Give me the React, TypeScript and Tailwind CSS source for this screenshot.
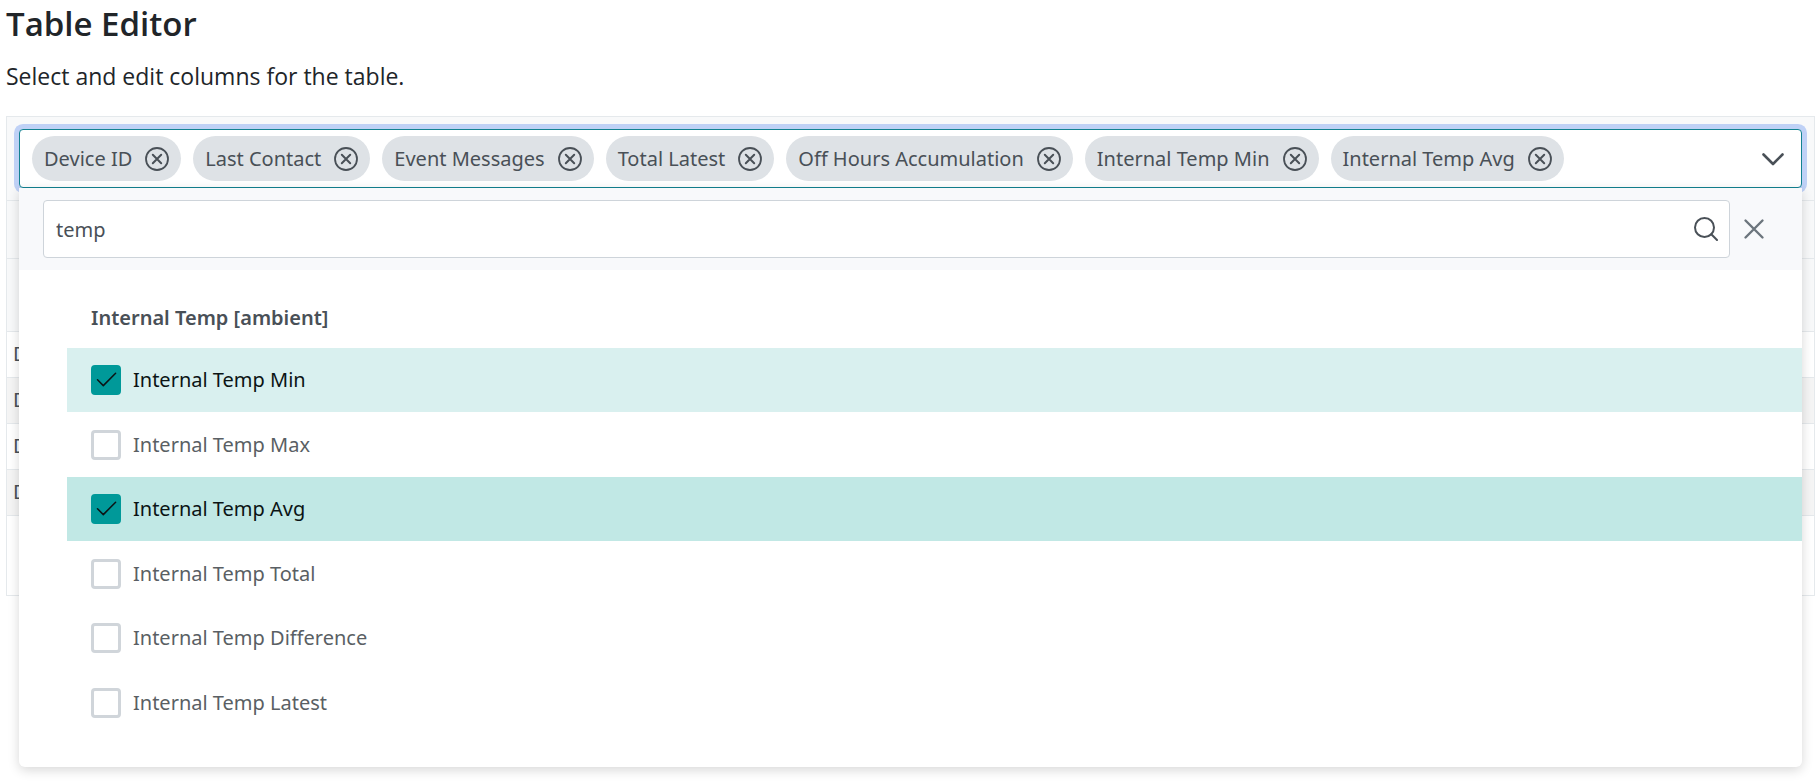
import { useState } from 'react'

const CHIPS = [
  'Device ID',
  'Last Contact',
  'Event Messages',
  'Total Latest',
  'Off Hours Accumulation',
  'Internal Temp Min',
  'Internal Temp Avg',
]

const OPTIONS = [
  'Internal Temp Min',
  'Internal Temp Max',
  'Internal Temp Avg',
  'Internal Temp Total',
  'Internal Temp Difference',
  'Internal Temp Latest',
]

const ROWS = ['D', 'D', 'D', 'D']

function Chip({ label, onRemove }: { label: string; onRemove: () => void }) {
  return (
    <li className="flex h-[45px] items-center gap-[13px] rounded-full bg-[#dee2e6] px-3 text-[#495057]">
      <span className="whitespace-nowrap">{label}</span>
      <button type="button" aria-label={`Remove ${label}`} onClick={onRemove} className="shrink-0">
        <svg className="block size-6" viewBox="0 0 24 24" fill="none" stroke="currentColor" strokeWidth="1.8" strokeLinecap="round">
          <circle cx="12" cy="12" r="11" />
          <path d="M7.8 7.8l8.4 8.4M16.2 7.8l-8.4 8.4" strokeWidth="2" />
        </svg>
      </button>
    </li>
  )
}

function Option({ label, checked, focused, onToggle }: {
  label: string; checked: boolean; focused: boolean; onToggle: () => void
}) {
  const tone = checked
    ? focused ? 'bg-[#c1e8e5] text-[#0b1415]' : 'bg-[#d9f0ef] text-[#0b1415]'
    : 'text-[#5a5f64]'
  return (
    <li className="flex-1">
      <label className={`flex h-16 items-center gap-3 px-6 ${tone}`}>
        <span className="grid size-[30px] shrink-0">
          <input
            type="checkbox"
            checked={checked}
            onChange={onToggle}
            className="col-start-1 row-start-1 size-full appearance-none rounded border-3 border-[#d0d5da] bg-white checked:border-[#009999] checked:bg-[#009999]"
          />
          {checked && (
            <svg className="pointer-events-none col-start-1 row-start-1 size-[30px]" viewBox="0 0 30 30" fill="none" stroke="#0b1415" strokeWidth="1.5" strokeLinecap="round" strokeLinejoin="round">
              <path d="M6.5 14.8l5.8 5.8L24.6 8.2" />
            </svg>
          )}
        </span>
        <span>{label}</span>
      </label>
    </li>
  )
}

export default function App() {
  const [selected, setSelected] = useState(CHIPS)
  const [query, setQuery] = useState('temp')

  const toggle = (name: string) =>
    setSelected((s) => (s.includes(name) ? s.filter((n) => n !== name) : [...s, name]))

  const visible = OPTIONS.filter((o) => o.toLowerCase().includes(query.toLowerCase()))

  return (
    <main className="min-h-screen bg-white pl-1.5 font-['Noto_Sans',sans-serif] text-[20px] leading-8 text-[#212529]">
      <h1 className="pt-1 font-['Open_Sans',sans-serif] text-[33px] leading-10 font-semibold">Table Editor</h1>
      <p className="pt-4 pb-6 font-['Open_Sans',sans-serif] text-[23px]">Select and edit columns for the table.</p>

      <section className="border border-[#e5e9ec]">
        <div className="border-b border-[#e5e9ec] bg-[#f8f9fa] p-3">
          <div className="relative">

            {/* Selected columns */}
            <div className="flex items-center justify-between rounded border border-[#128291] bg-white px-3 py-1.5 shadow-[0_0_0_5px_#bfd1f6]">
              <ul className="flex flex-wrap gap-3">
                {selected.map((c) => <Chip key={c} label={c} onRemove={() => toggle(c)} />)}
              </ul>
              <button type="button" aria-label="Toggle column list" className="pr-1 text-[#495057]">
                <svg className="block size-6" viewBox="0 0 24 24" fill="none" stroke="currentColor" strokeWidth="2.6" strokeLinecap="round" strokeLinejoin="round">
                  <path d="M2.5 7.5l9.5 9.5L21.5 7.5" />
                </svg>
              </button>
            </div>

            {/* Column picker */}
            <div className="absolute inset-x-0 top-full z-10 rounded-b-md bg-white text-[#495057] shadow-[0_3px_12px_rgba(0,0,0,0.16)]">
              <div className="flex items-center bg-[#f8f9fb] px-6 py-3">
                <div className="flex h-[58px] flex-1 items-center rounded border border-[#ced4da] bg-white pr-[11px] pl-3">
                  <input
                    type="text"
                    aria-label="Filter columns"
                    value={query}
                    onChange={(e) => setQuery(e.target.value)}
                    className="min-w-0 flex-1 pt-0.5 outline-none"
                  />
                  <svg className="size-6 shrink-0" viewBox="0 0 24 24" fill="none" stroke="currentColor" strokeWidth="2" strokeLinecap="round">
                    <circle cx="10.5" cy="10.5" r="9.5" />
                    <path d="M17.3 17.3l5.7 5.7" />
                  </svg>
                </div>
                <button type="button" aria-label="Close" className="px-3 text-[#6c757d]">
                  <svg className="block size-6" viewBox="0 0 24 24" fill="none" stroke="currentColor" strokeWidth="2.4" strokeLinecap="round">
                    <path d="M3.5 3.5l17 17M20.5 3.5l-17 17" />
                  </svg>
                </button>
              </div>

              <div className="pt-[18px] pb-8 pl-12">
                <h2 className="flex h-[60px] items-center px-6 font-semibold">Internal Temp [ambient]</h2>
                <ul className="flex h-[387px] flex-col">
                  {visible.map((o) => (
                    <Option
                      key={o}
                      label={o}
                      checked={selected.includes(o)}
                      focused={o === 'Internal Temp Avg'}
                      onToggle={() => toggle(o)}
                    />
                  ))}
                </ul>
              </div>
            </div>
          </div>
        </div>

        <table className="w-full border-collapse text-left text-[#495057]">
          <thead className="bg-[#f8f9fa]">
            <tr className="h-[57px] border-b border-[#e5e9ec]"><th /></tr>
            <tr className="h-[73px] border-b border-[#e5e9ec]"><th /></tr>
          </thead>
          <tbody>
            {ROWS.map((r, i) => (
              <tr key={i} className="h-[46px] border-b border-[#e5e9ec] even:bg-[#f5f5f5]">
                <td className="px-1.5">{r}</td>
              </tr>
            ))}
          </tbody>
        </table>
        <div className="h-[79px]" />
      </section>
    </main>
  )
}
